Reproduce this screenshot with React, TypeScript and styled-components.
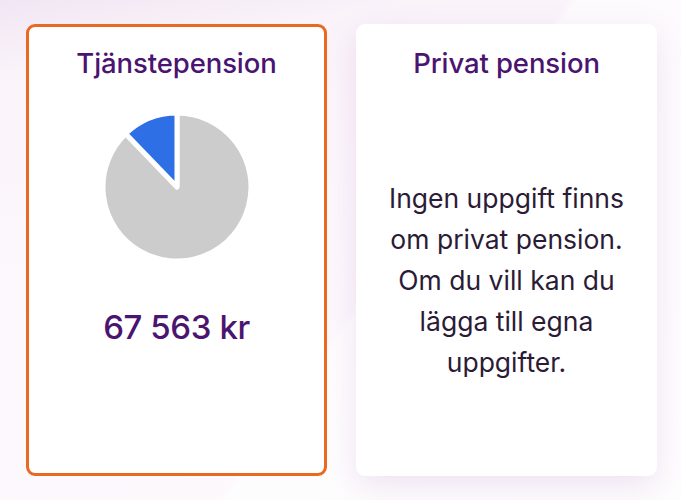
import React from "react";
import styled, { createGlobalStyle } from "styled-components";

const Global = createGlobalStyle`
  html, body { margin: 0; padding: 0; }
  body {
    font-family: Inter, "Noto Sans", Arial, sans-serif;
    background: #fcf7fc;
  }
`;

const Page = styled.div`
  width: 681px;
  height: 500px;
  box-sizing: border-box;
  padding: 24px 24px 24px 26px;
  overflow: hidden;
  background:
    linear-gradient(125deg, rgba(255,255,255,0) 0%, rgba(255,255,255,0) 55%, rgba(255,255,255,0.6) 56%, rgba(255,255,255,0.6) 100%),
    linear-gradient(170deg, #f1e6f3 0%, #faf3fa 12%, #fcf7fc 40%, #fdf9fd 100%);
`;

const Grid = styled.div`
  display: grid;
  grid-template-columns: 301px 301px;
  column-gap: 29px;
  height: 452px;
`;

const Card = styled.section<{ $selected?: boolean }>`
  box-sizing: border-box;
  background: #ffffff;
  border-radius: 9px;
  display: flex;
  flex-direction: column;
  align-items: center;
  padding: ${(p) => (p.$selected ? "17px 16px 20px" : "20px 16px 20px")};
  border: ${(p) => (p.$selected ? "3px solid #e8691f" : "none")};
  box-shadow: ${(p) =>
    p.$selected ? "none" : "0 10px 30px rgba(170, 110, 190, 0.18)"};
`;

const Title = styled.h2`
  margin: 0;
  font-size: 27.5px;
  line-height: 38px;
  font-weight: 500;
  color: #4b1470;
  letter-spacing: -0.1px;
`;

const PieWrap = styled.div`
  margin-top: 29px;
  width: 152px;
  height: 152px;
`;

const Amount = styled.div`
  margin-top: 44px;
  font-size: 33px;
  line-height: 40px;
  font-weight: 500;
  color: #4b1470;
  letter-spacing: -0.4px;
`;

const Body = styled.div`
  flex: 1;
  display: flex;
  align-items: center;
  justify-content: center;
  padding-top: 22px;
`;

const Message = styled.p`
  margin: 0;
  text-align: center;
  font-size: 26.5px;
  line-height: 41px;
  font-weight: 400;
  color: #2b1b36;
  width: 270px;
`;

function polar(cx: number, cy: number, r: number, deg: number) {
  const a = ((deg - 90) * Math.PI) / 180;
  return [cx + r * Math.cos(a), cy + r * Math.sin(a)];
}

function sector(cx: number, cy: number, r: number, start: number, end: number) {
  const [x1, y1] = polar(cx, cy, r, start);
  const [x2, y2] = polar(cx, cy, r, end);
  const large = end - start > 180 ? 1 : 0;
  return `M ${cx} ${cy} L ${x1} ${y1} A ${r} ${r} 0 ${large} 1 ${x2} ${y2} Z`;
}

function Pie({ share }: { share: number }) {
  const cx = 76;
  const cy = 76;
  const r = 74;
  const blueDeg = share * 360;
  return (
    <svg width="152" height="152" viewBox="0 0 152 152">
      <path
        d={sector(cx, cy, r, 0, 360 - blueDeg)}
        fill="#cccccc"
        stroke="#ffffff"
        strokeWidth="5"
        strokeLinejoin="round"
      />
      <path
        d={sector(cx, cy, r, 360 - blueDeg, 359.99)}
        fill="#2f6fe6"
        stroke="#ffffff"
        strokeWidth="5"
        strokeLinejoin="round"
      />
    </svg>
  );
}

export default function App() {
  return (
    <>
      <Global />
      <Page>
        <Grid>
          <Card $selected>
            <Title>Tjänstepension</Title>
            <PieWrap>
              <Pie share={0.122} />
            </PieWrap>
            <Amount>67 563 kr</Amount>
          </Card>
          <Card>
            <Title>Privat pension</Title>
            <Body>
              <Message>
                Ingen uppgift finns om privat pension. Om du vill kan du lägga
                till egna uppgifter.
              </Message>
            </Body>
          </Card>
        </Grid>
      </Page>
    </>
  );
}
